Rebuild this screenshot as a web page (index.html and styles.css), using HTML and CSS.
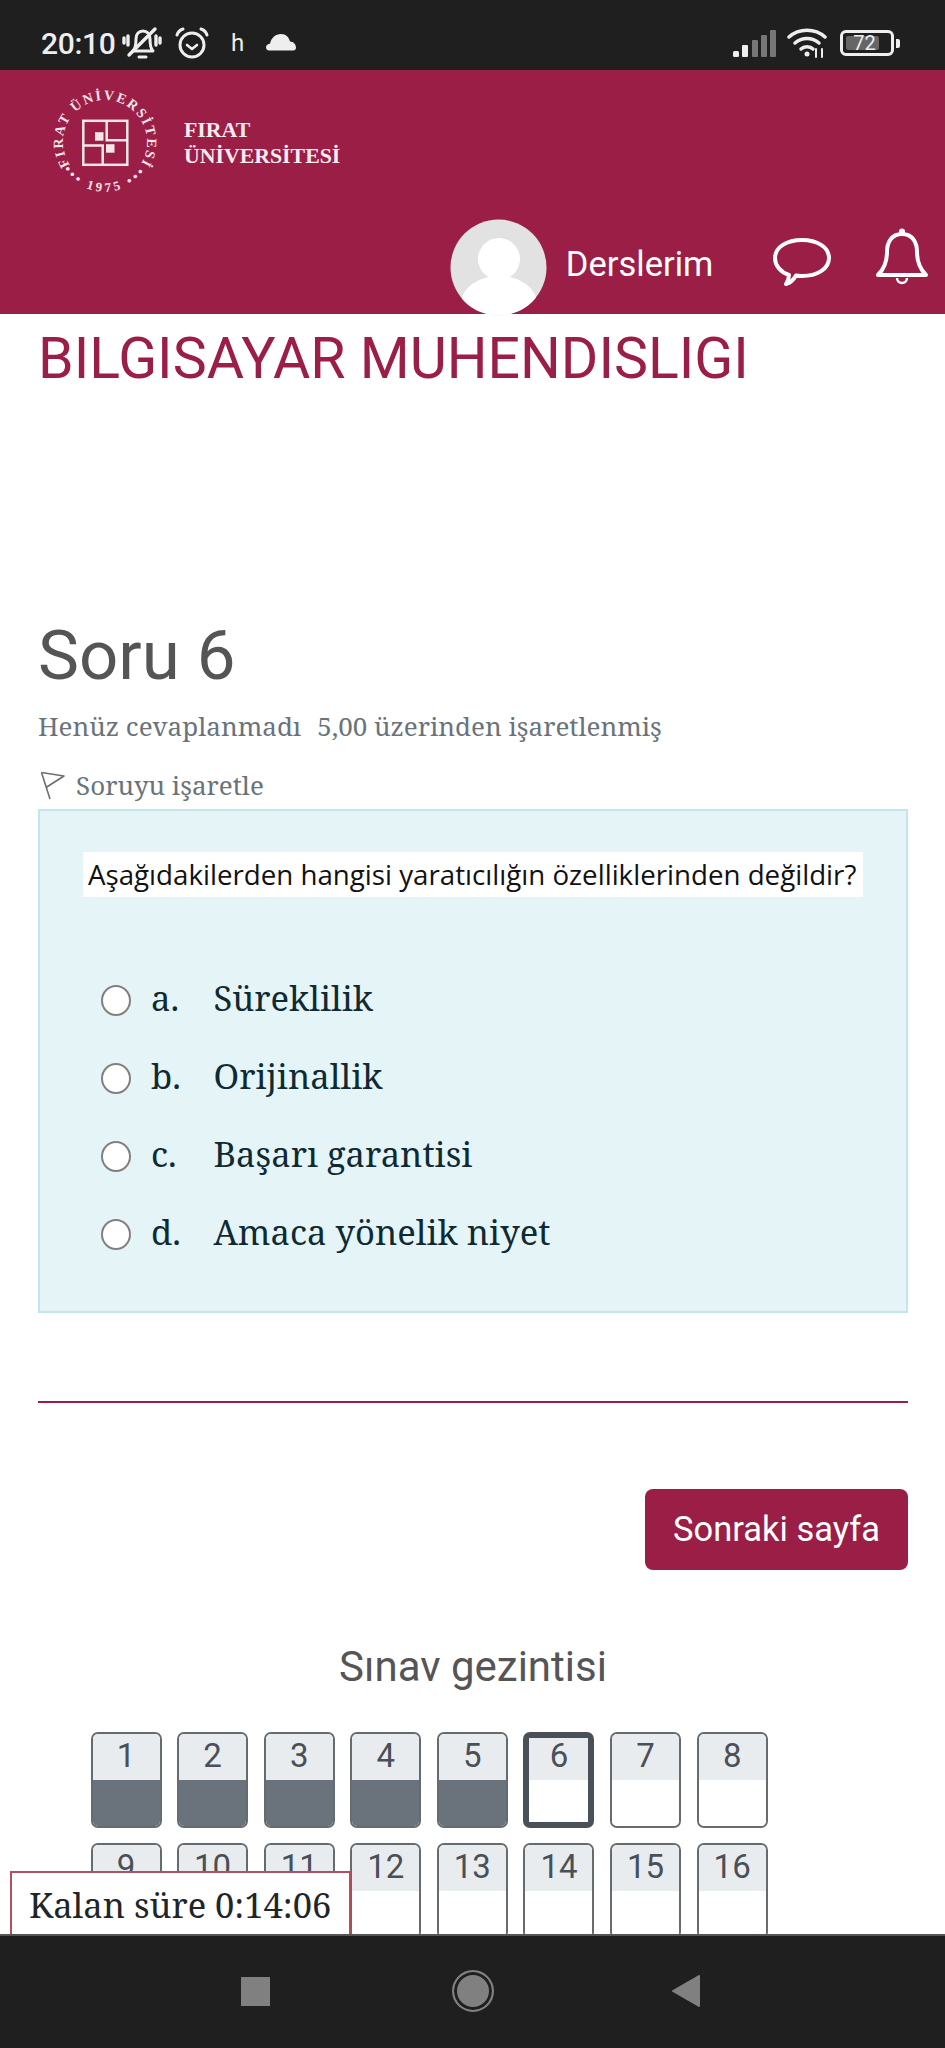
FILE: index.html
```html
<!DOCTYPE html>
<html lang="tr">
<head>
<meta charset="utf-8">
<title>Soru 6</title>
<link rel="stylesheet" href="styles.css">
</head>
<body>
<div class="statusbar">
  <div class="status-left">
    <span class="clock">20:10</span>
    <svg class="ic-mute" viewBox="0 0 40 34" fill="none" stroke="#eee" stroke-width="3" stroke-linecap="round" stroke-linejoin="round">
      <path d="M11 25c3-3 3-7 3-12 0-5 3-8 7-8s7 3 7 8c0 5 0 9 3 12z"/>
      <path d="M17 31h7"/>
      <path d="M33 3 7 29" stroke-width="3.400"/>
      <path d="M6 10v9M2 12v5M34 10v9M38 12v5" stroke-width="3.400"/>
    </svg>
    <svg class="ic-alarm" viewBox="0 0 34 32" fill="none" stroke="#eee" stroke-width="3" stroke-linecap="round" stroke-linejoin="round">
      <circle cx="17" cy="18" r="12"/>
      <path d="M12 18l5 4 5-4" stroke-width="2.600"/>
      <path d="M2 8c1-3 3-5 6-6M32 8c-1-3-3-5-6-6"/>
    </svg>
    <span class="h-glyph">h</span>
    <svg class="ic-cloud" viewBox="0 0 30 18"><path fill="#eee" d="M3 17.500C1 17.500 0 16 0 14.500 0 12 2 11 4 10.800 5 5 9.500 1 15 1c5 0 8 3.500 9 7.500 3.500 0 6 3 6 6 0 2-1 3-3 3z"/></svg>
  </div>
  <div class="status-right">
    <svg class="ic-signal" viewBox="0 0 43 27">
      <rect class="bar-on" x="0" y="21" width="6" height="6" rx="1.500"/>
      <rect class="bar-on" x="9" y="15" width="6" height="12" rx="1"/>
      <rect class="bar-off" x="19" y="10" width="6" height="17" rx="1"/>
      <rect class="bar-off" x="28" y="5" width="6" height="22" rx="1"/>
      <rect class="bar-off" x="37" y="0" width="6" height="27" rx="1"/>
    </svg>
    <svg class="ic-wifi" viewBox="0 0 40 30" fill="none" stroke="#eee" stroke-width="3.500" stroke-linecap="round">
      <path d="M2 9c10-9 26-9 36 0"/>
      <path d="M8 15c7-6 17-6 24 0"/>
      <path d="M14 21c3-3 9-3 12 0"/>
      <circle cx="20" cy="26" r="2.500" fill="#eee" stroke="none"/>
      <path d="M29 21v8M35 21v8" stroke-width="2"/>
    </svg>
    <div class="battery">
      <div class="battery-body"><div class="battery-fill"></div><span class="battery-num">72</span></div>
      <div class="battery-tip"></div>
    </div>
  </div>
</div>

<header class="topbar">
  <div class="brand">
    <svg class="seal" viewBox="0 0 110 110">
      <defs>
        <path id="sealTop" d="M20.600 79.100A42 42 0 1 1 89.400 79.100"/>
        <path id="sealBottom" d="M7 71A51 51 0 0 0 103 71"/>
      </defs>
      <text class="seal-text"><textPath href="#sealTop" startOffset="50%" text-anchor="middle">FIRAT ÜNİVERSİTESİ</textPath></text>
      <text class="seal-year"><textPath href="#sealBottom" startOffset="50%" text-anchor="middle">••• 1975 •••</textPath></text>
      <g fill="none" stroke="#f6e6ea" stroke-width="2.500">
        <rect x="33.300" y="33.800" width="44" height="44"/>
        <path d="M56.700 33.800V53.200H77.300M33.300 58.500H52.700V77.800"/>
      </g>
      <rect x="45" y="45.200" width="8.500" height="8.500" fill="#f6e6ea"/>
      <rect x="56" y="57.200" width="8.500" height="8.500" fill="#f6e6ea"/>
    </svg>
    <div class="brand-name">FIRAT<br>ÜNİVERSİTESİ</div>
  </div>
  <nav class="topnav">
    <svg class="avatar" viewBox="0 0 97 97">
      <defs><clipPath id="avatarClip"><circle cx="48.500" cy="48.500" r="48"/></clipPath></defs>
      <circle cx="48.500" cy="48.500" r="48" fill="#e2e2e2"/>
      <g clip-path="url(#avatarClip)" fill="#fff">
        <circle cx="49" cy="40" r="21"/>
        <ellipse cx="49" cy="84" rx="38" ry="27"/>
      </g>
    </svg>
    <a class="nav-link">Derslerim</a>
    <svg class="ic-comment" viewBox="0 0 60 50" fill="none" stroke="#fff" stroke-width="4" stroke-linejoin="round">
      <path d="M17 38C8 35 3 28 3 21 3 10 15 3 30 3s27 7 27 18-12 18-27 18c-2 0-4 0-6-.500-2 3.500-6 7.500-10 8.500 2-3 3-6 3-9z"/>
    </svg>
    <svg class="ic-bell" viewBox="0 0 54 58" fill="none" stroke="#fff" stroke-width="4" stroke-linejoin="round">
      <path d="M27 6C16 6 12 15 12 24c0 12-4 18-9 23h48c-5-5-9-11-9-23 0-9-4-18-15-18z"/>
      <circle cx="27" cy="3.500" r="3" fill="#fff" stroke="none"/>
      <path d="M22 50a5 5 0 0 0 10 0" stroke-width="2.500"/>
    </svg>
  </nav>
</header>

<main class="content">
  <h1 class="course-title">BILGISAYAR MUHENDISLIGI</h1>
  <h2 class="question-no">Soru 6</h2>
  <div class="question-meta"><span>Henüz cevaplanmadı</span><span>5,00 üzerinden işaretlenmiş</span></div>
  <div class="flag-row">
    <svg class="ic-flag" viewBox="0 0 25 29" fill="none" stroke="#6a6f74" stroke-width="1.600" stroke-linejoin="round">
      <path d="M1.500 1.500 10 28"/>
      <path d="M1.500 1.500 24 5 6 16.500"/>
    </svg>
    <span>Soruyu işaretle</span>
  </div>
  <section class="question-box">
    <div class="question-text">Aşağıdakilerden hangisi yaratıcılığın özelliklerinden değildir?</div>
    <div class="answers">
      <div class="answer"><span class="radio"></span><span class="letter">a.</span><span class="label">Süreklilik</span></div>
      <div class="answer"><span class="radio"></span><span class="letter">b.</span><span class="label">Orijinallik</span></div>
      <div class="answer"><span class="radio"></span><span class="letter">c.</span><span class="label">Başarı garantisi</span></div>
      <div class="answer"><span class="radio"></span><span class="letter">d.</span><span class="label">Amaca yönelik niyet</span></div>
    </div>
  </section>
  <hr class="divider">
  <div class="actions"><a class="next-btn">Sonraki sayfa</a></div>
  <h3 class="nav-title">Sınav gezintisi</h3>
  <div class="quiz-grid">
    <div class="cell answered"><span class="num">1</span><span class="state"></span></div>
    <div class="cell answered"><span class="num">2</span><span class="state"></span></div>
    <div class="cell answered"><span class="num">3</span><span class="state"></span></div>
    <div class="cell answered"><span class="num">4</span><span class="state"></span></div>
    <div class="cell answered"><span class="num">5</span><span class="state"></span></div>
    <div class="cell current"><span class="num">6</span><span class="state"></span></div>
    <div class="cell"><span class="num">7</span><span class="state"></span></div>
    <div class="cell"><span class="num">8</span><span class="state"></span></div>
    <div class="cell"><span class="num">9</span><span class="state"></span></div>
    <div class="cell"><span class="num">10</span><span class="state"></span></div>
    <div class="cell"><span class="num">11</span><span class="state"></span></div>
    <div class="cell"><span class="num">12</span><span class="state"></span></div>
    <div class="cell"><span class="num">13</span><span class="state"></span></div>
    <div class="cell"><span class="num">14</span><span class="state"></span></div>
    <div class="cell"><span class="num">15</span><span class="state"></span></div>
    <div class="cell"><span class="num">16</span><span class="state"></span></div>
  </div>
</main>

<div class="timer">Kalan süre 0:14:06</div>

<footer class="navbar">
  <span class="nav-square"></span>
  <span class="nav-circle"></span>
  <svg class="nav-back" viewBox="0 0 28 32"><path fill="#808080" stroke="#808080" stroke-width="2" stroke-linejoin="round" d="M27 1v30L1 16z"/></svg>
</footer>
</body>
</html>
```

FILE: styles.css
```css
* { box-sizing: border-box; }
html, body { margin: 0; padding: 0; background: #fff; }
body { font-family: "Roboto", "Liberation Sans", sans-serif; overflow: hidden; height: 2048px; }

/* status bar */
.statusbar { height: 70px; background: #1f1f1f; display: flex; justify-content: space-between; align-items: center; padding: 16px 45px 0 41px; color: #eee; }
.status-left, .status-right { display: flex; align-items: center; }
.clock { font-size: 30px; font-weight: 500; width: 81px; letter-spacing: -.3px; }
.ic-mute { width: 40px; height: 34px; }
.ic-alarm { width: 34px; height: 32px; margin-left: 13px; }
.h-glyph { font-size: 24px; font-weight: 400; margin-left: 22px; width: 35px; }
.ic-cloud { width: 30px; height: 18px; margin-top: -3px; }
.ic-signal { width: 43px; height: 27px; margin-right: 11px; }
.bar-on { fill: #eee; }
.bar-off { fill: #777; }
.ic-wifi { width: 40px; height: 30px; margin-right: 13px; }
.battery { display: flex; align-items: center; }
.battery-body { position: relative; width: 54px; height: 26px; border: 3px solid #eee; border-radius: 6px; display: flex; align-items: center; justify-content: center; overflow: hidden; padding: 0 5px 0 0; }
.battery-fill { position: absolute; left: 3px; top: 3px; bottom: 3px; width: 33px; background: #666; border-radius: 2px; }
.battery-num { position: relative; font-size: 20px; color: #eee; line-height: 1; }
.battery-tip { width: 4px; height: 9px; background: #eee; border-radius: 0 2px 2px 0; margin-left: 2px; }

/* header */
.topbar { height: 244px; background: #9b1e47; display: flex; flex-direction: column; justify-content: space-between; padding: 17px 16px 0 50px; }
.brand { display: flex; align-items: center; }
.seal { width: 110px; height: 110px; overflow: visible; }
.seal-text { font-family: "Liberation Serif", serif; font-size: 14px; font-weight: 700; fill: #f6e6ea; letter-spacing: 1.9px; }
.seal-year { font-family: "Liberation Serif", serif; font-size: 13px; font-weight: 700; fill: #f6e6ea; letter-spacing: 3.2px; }
.brand-name { font-family: "Liberation Serif", serif; font-weight: 700; font-size: 21.800px; line-height: 26px; color: #f8ecef; margin-left: 24px; margin-top: 2px; }
.topnav { display: flex; align-items: center; justify-content: flex-end; height: 96px; margin-bottom: -1px; }
.avatar { width: 97px; height: 97px; }
.nav-link { color: #fff; font-size: 34.500px; margin-left: 19px; margin-top: -6px; }
.ic-comment { width: 60px; height: 50px; margin-left: 58.700px; margin-top: -11px; }
.ic-bell { width: 54px; height: 58px; margin-left: 43px; margin-top: -20px; }

/* content */
.content { padding: 0 37px 0 38px; }
.course-title { margin: 0; padding-top: 10px; color: #9b1e47; font-size: 57.200px; font-weight: 400; line-height: 70px; white-space: nowrap; }
.question-no { margin: 0; padding-top: 220px; color: #555; font-size: 69px; font-weight: 400; line-height: 84px; }
.question-meta { font-family: "Noto Serif", "DejaVu Serif", serif; font-size: 26px; color: #6a737b; display: flex; gap: 16px; margin-top: 10px; line-height: 36px; }
.flag-row { font-family: "Noto Serif", "DejaVu Serif", serif; font-size: 26px; color: #6a737b; display: flex; align-items: center; gap: 11px; height: 36px; margin-top: 23px; margin-left: 2px; }
.ic-flag { width: 25px; height: 29px; }
.question-box { margin-top: 6px; height: 504px; background: #e5f5f7; border: 2px solid #c4e5ea; padding: 41px 43px 0; }
.question-text { background: #fff; width: 780px; height: 45px; font-family: "Open Sans", "Noto Sans", sans-serif; font-size: 27.700px; line-height: 45px; padding-left: 5px; color: #111; white-space: nowrap; }
.answers { margin-top: 64px; margin-left: 17.800px; }
.answer { display: flex; align-items: center; height: 78px; font-family: "Noto Serif", "DejaVu Serif", serif; font-size: 34.600px; color: #0f2a33; }
.radio { width: 30px; height: 31px; border-radius: 50%; background: #fff; border: 2.500px solid #808080; flex: none; }
.letter { width: 62.400px; margin-left: 20.300px; flex: none; padding-bottom: 6px; }
.label { padding-bottom: 6px; }
.divider { border: 0; height: 2px; background: #9b1e47; margin: 88px 0 0; }
.actions { display: flex; justify-content: flex-end; margin-top: 85.500px; }
.next-btn { display: flex; align-items: center; justify-content: center; width: 263px; height: 81px; border-radius: 8px; background: #9b1e47; color: #fff; font-size: 34.500px; }
.nav-title { margin: 0; text-align: center; color: #555; font-size: 42px; font-weight: 400; line-height: 50px; padding-top: 72.500px; }
.quiz-grid { display: grid; grid-template-columns: repeat(8, 71px); column-gap: 15.600px; row-gap: 15px; margin: 40px 0 0 52.500px; }
.cell { height: 96px; border: 2px solid #666b70; border-radius: 7px; overflow: hidden; display: flex; flex-direction: column; }
.num { height: 46px; background: #e9ecef; color: #495057; font-size: 33px; line-height: 44px; text-align: center; flex: none; }
.state { flex: 1; background: #fff; }
.answered .state { background: #6a737b; }
.current { border: 6px solid #495057; border-radius: 7px; }
.current .num { height: 42px; line-height: 36px; }

/* overlays */
.timer { position: fixed; left: 10px; bottom: 114px; width: 341px; height: 63px; background: #fff; border: 2px solid #b2505f; border-bottom: 0; font-family: "Noto Serif", "DejaVu Serif", serif; font-size: 34.500px; color: #212529; line-height: 63px; padding-left: 17px; white-space: nowrap; }
.navbar { position: fixed; left: 0; right: 0; bottom: 0; height: 114px; background: #1f1f1f; border-top: 2px solid #555; }
.nav-square { position: absolute; left: 241px; top: 41px; width: 29px; height: 29px; background: #808080; }
.nav-circle { position: absolute; left: 452px; top: 34px; width: 42px; height: 42px; border-radius: 50%; background: #808080; border: 2px solid #808080; box-shadow: inset 0 0 0 3px #1f1f1f; }
.nav-back { position: absolute; left: 672px; top: 39px; width: 28px; height: 32px; }
```
